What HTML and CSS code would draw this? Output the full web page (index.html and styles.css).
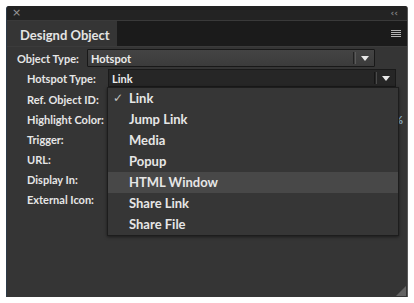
FILE: index.html
```html
<!DOCTYPE html>
<html>
<head>
<meta charset="utf-8">
<link rel="stylesheet" href="styles.css">
</head>
<body>
<div class="panel">
  <div class="titlebar">
    <span class="close">×</span>
    <span class="collapse">‹‹</span>
  </div>
  <div class="tabrow">
    <div class="tab">Designd Object</div>
    <div class="menu"><i></i><i></i><i></i><i></i></div>
  </div>
  <div class="content">
    <div class="row row-top">
      <span class="label">Object Type:</span>
      <div class="select sel-light">
        <span class="val">Hotspot</span>
        <span class="sep"></span>
        <span class="arrow"></span>
      </div>
    </div>
    <div class="row row-sub">
      <span class="label">Hotspot Type:</span>
      <div class="select sel-dark">
        <span class="val">Link</span>
        <span class="sep"></span>
        <span class="arrow"></span>
        <ul class="dropdown">
          <li><span class="check">✓</span>Link</li>
          <li>Jump Link</li>
          <li>Media</li>
          <li>Popup</li>
          <li class="hl">HTML Window</li>
          <li>Share Link</li>
          <li>Share File</li>
        </ul>
      </div>
    </div>
    <div class="fields">
      <div class="field"><span class="label">Ref. Object ID:</span></div>
      <div class="field"><span class="label">Highlight Color:</span><span class="pct">%</span></div>
      <div class="field"><span class="label">Trigger:</span></div>
      <div class="field"><span class="label">URL:</span></div>
      <div class="field"><span class="label">Display In:</span></div>
      <div class="field"><span class="label">External Icon:</span></div>
    </div>
    <div class="grip"></div>
  </div>
</div>
</body>
</html>
```
FILE: styles.css
```css
html, body {
  margin: 0;
  padding: 0;
  background: #ffffff;
}
body {
  padding: 6px 6px 0 6px;
  font-family: "Lato", "Open Sans", "DejaVu Sans", sans-serif;
}
.panel {
  width: 402px;
  height: 291px;
  box-sizing: border-box;
  display: flex;
  flex-direction: column;
  background: #353535;
  border-left: 1px solid #2c3a48;
  border-right: 1px solid #5a5a5a;
  border-radius: 3px 3px 0 0;
  overflow: hidden;
  position: relative;
}
.titlebar {
  height: 14px;
  flex: none;
  background: #232323;
  border-bottom: 1px solid #3a3a3a;
  display: flex;
  align-items: center;
  justify-content: space-between;
  padding: 0 9px 0 5px;
  color: #9a9a9a;
}
.close {
  font-family: "DejaVu Sans", sans-serif;
  font-size: 11px;
  line-height: 14px;
}
.collapse {
  font-family: "DejaVu Sans", sans-serif;
  font-size: 9px;
  font-weight: 700;
  letter-spacing: 0;
  line-height: 14px;
  color: #808080;
}
.tabrow {
  height: 25px;
  flex: none;
  background: #1b1b1b;
  border-bottom: 1px solid #3b3b3b;
  display: flex;
  align-items: stretch;
  justify-content: space-between;
}
.tab {
  width: 110px;
  background: #353535;
  color: #e4e4e4;
  font-weight: 700;
  font-size: 13px;
  display: flex;
  align-items: center;
  padding-left: 13px;
  box-sizing: border-box;
  padding-top: 2px;
}
.menu {
  width: 10px;
  margin-right: 6px;
  display: flex;
  flex-direction: column;
  justify-content: center;
  gap: 1px;
}
.menu i {
  display: block;
  height: 1px;
  background: #b5b5b5;
}
.content {
  flex: 1;
  position: relative;
  padding-top: 2px;
  color: #e2e2e2;
}
.label {
  font-size: 11px;
  font-weight: 700;
  color: #e6e6e6;
  white-space: nowrap;
}
.row {
  display: flex;
  align-items: center;
  height: 18px;
  margin-bottom: 2px;
}
.row-top {
  padding-left: 10px;
}
.row-top .label {
  width: 70px;
}
.row-sub {
  padding-left: 20px;
}
.row-sub .label {
  width: 81px;
}
.select {
  height: 18px;
  box-sizing: border-box;
  border: 1px solid #181818;
  display: flex;
  align-items: center;
  position: relative;
}
.sel-light {
  width: 288px;
  background: linear-gradient(#444444, #3b3b3b);
  border-radius: 1px;
}
.sel-dark {
  width: 288px;
  background: #262626;
  border-color: #1a1a1a;
}
.val {
  flex: 1;
  font-size: 11px;
  font-weight: 700;
  color: #ececec;
  padding-left: 3px;
}
.sep {
  width: 3px;
  height: 12px;
  border-left: 1px solid #222;
  border-right: 1px solid #5a5a5a;
  box-sizing: border-box;
  margin-right: 5px;
}
.sel-dark .sep {
  border-left-color: #161616;
  border-right-color: #4a4a4a;
}
.arrow {
  width: 0;
  height: 0;
  border-left: 4px solid transparent;
  border-right: 4px solid transparent;
  border-top: 5px solid #e8e8e8;
  margin-right: 5px;
  margin-top: 1px;
}
.dropdown {
  position: absolute;
  top: 17px;
  left: -2px;
  width: 290px;
  margin: 0;
  padding: 0;
  list-style: none;
  background: #363636;
  border: 1px solid #1d1d1d;
  box-shadow: 0 1px 3px rgba(0, 0, 0, 0.5);
  z-index: 2;
}
.dropdown li {
  height: 21px;
  line-height: 21px;
  padding-left: 21px;
  font-size: 13px;
  font-weight: 700;
  color: #e6e6e6;
  position: relative;
}
.dropdown li.hl {
  background: #484848;
}
.check {
  position: absolute;
  left: 5px;
  top: 0;
  font-family: "DejaVu Sans", sans-serif;
  font-size: 12px;
  font-weight: 700;
  color: #c4c4c4;
}
.fields {
  display: flex;
  flex-direction: column;
  padding-left: 20px;
}
.field {
  height: 20px;
  display: flex;
  align-items: center;
  justify-content: space-between;
}
.pct {
  font-size: 11px;
  font-weight: 700;
  color: #8fb4d0;
  margin-right: 4px;
}
.grip {
  position: absolute;
  right: 1px;
  bottom: 1px;
  width: 10px;
  height: 10px;
  background:
    radial-gradient(circle, #9a9a9a 0.6px, transparent 0.8px) 0 0 / 2px 2px;
  clip-path: polygon(100% 0, 100% 100%, 0 100%);
}
```
